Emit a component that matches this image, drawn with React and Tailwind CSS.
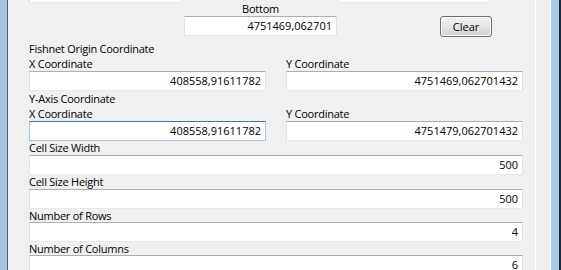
import React from 'react'

function Box({ value, focused, className = '' }) {
  const border = focused
    ? 'border-[#a4c9e3] border-t-[#3d7bad]'
    : 'border-[#e2e3ea] border-t-[#abadb3] border-b-[#e3e9ef]'
  return (
    <div
      className={`h-[20px] bg-white border flex items-center justify-end pr-[4px] text-black ${border} ${className}`}
    >
      {value}
    </div>
  )
}

function Label({ children, h = 'h-[15px] leading-[15px]' }) {
  return <div className={`${h} text-black whitespace-nowrap tracking-[-0.25px]`}>{children}</div>
}

export default function App() {
  return (
    <div
      className="w-[561px] h-[270px] overflow-hidden flex bg-[#f0f0f0] text-[11px]"
      style={{ fontFamily: '"Open Sans", "Noto Sans", sans-serif' }}
    >
      <div className="w-[8px] bg-[#a9c2dd] border-r border-[#4f5f72]" />

      <div className="w-[527px] pl-[21px] pr-[12px]">
        {/* top row, cut off */}
        <div className="flex -mt-[17px] h-[20px]">
          <Box value="" className="w-[153px]" />
          <Box value="" className="w-[152px] ml-[156px]" />
        </div>

        <div className="flex items-start">
          <div className="ml-[155px] w-[153px] flex flex-col">
            <div className="h-[13px] leading-[12px] text-center text-black tracking-[-0.25px]">Bottom</div>
            <Box value="4751469,062701" className="h-[19px]" />
          </div>
          <button className="ml-[103px] mt-[13px] w-[52px] h-[21px] rounded-[3px] border border-[#707070] bg-linear-to-b from-[#f2f2f2] via-[#e6e6e6] to-[#cfcfcf] shadow-[inset_0_0_0_1px_#fbfbfb] text-black leading-none">
            Clear
          </button>
        </div>

        <div className="mt-[4px]">
          <Label>Fishnet Origin Coordinate</Label>
          <div className="grid grid-cols-2 gap-x-[20px]">
            <div>
              <Label>X Coordinate</Label>
              <Box value="408558,91611782" />
            </div>
            <div>
              <Label>Y Coordinate</Label>
              <Box value="4751469,062701432" />
            </div>
          </div>
        </div>

        <div>
          <Label>Y-Axis Coordinate</Label>
          <div className="grid grid-cols-2 gap-x-[20px]">
            <div>
              <Label>X Coordinate</Label>
              <Box value="408558,91611782" focused />
            </div>
            <div>
              <Label>Y Coordinate</Label>
              <Box value="4751479,062701432" />
            </div>
          </div>
        </div>

        <Label h="h-[14px] leading-[14px]">Cell Size Width</Label>
        <Box value="500" />
        <Label h="h-[14px] leading-[14px]">Cell Size Height</Label>
        <Box value="500" />
        <Label h="h-[13px] leading-[13px]">Number of Rows</Label>
        <Box value="4" />
        <Label h="h-[13px] leading-[13px]">Number of Columns</Label>
        <Box value="6" />
      </div>

      <div className="w-[16px] border-l border-white bg-[#eeeeee] border-r border-[#cfcfcf]" />
      <div className="w-[10px] bg-[#a9c7e7] border-r-2 border-[#1f2a36]" />
    </div>
  )
}
